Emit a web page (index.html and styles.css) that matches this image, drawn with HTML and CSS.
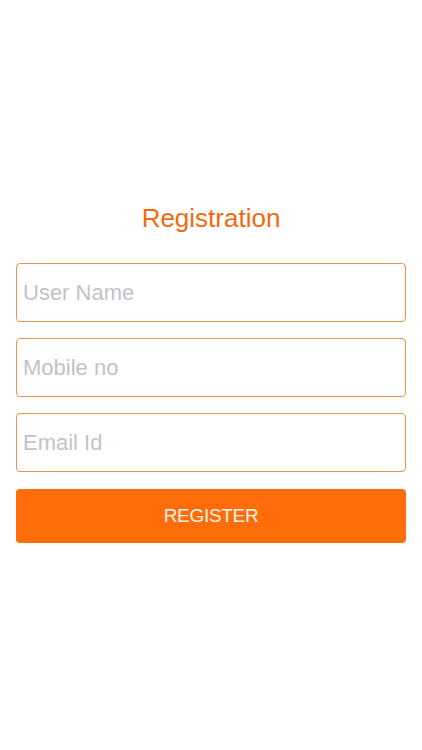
FILE: index.html
```html
<!DOCTYPE html>
<html lang="en">
<head>
  <meta charset="UTF-8" />
  <meta name="viewport" content="width=device-width, initial-scale=1.0"/>
  <title>Registration</title>
  <link rel="stylesheet" href="styles.css">
</head>
<body>
  <div class="container">
    <h1 class="title">Registration</h1>
    <form class="form">
      <input class="field" type="text" placeholder="User Name">
      <input class="field" type="tel" placeholder="Mobile no">
      <input class="field" type="email" placeholder="Email Id">
      <button class="btn" type="button">REGISTER</button>
    </form>
  </div>
</body>
</html>
```

FILE: styles.css
```css
* {
  margin: 0;
  padding: 0;
  box-sizing: border-box;
}

html, body {
  height: 100%;
  font-family: 'Liberation Sans', Arial, sans-serif;
  background: #ffffff;
}

.container {
  padding: 201px 16px 0;
}

.title {
  font-size: 26px;
  font-weight: normal;
  color: #f26a10;
  text-align: center;
  line-height: 34px;
}

.form {
  margin-top: 28px;
  display: flex;
  flex-direction: column;
  gap: 16px;
}

.field {
  height: 59px;
  border: 1px solid #f0924a;
  border-radius: 4px;
  padding: 0 6px;
  font-family: inherit;
  font-size: 22px;
  color: #333;
  outline: none;
}

.field::placeholder {
  color: #c2c2c8;
}

.btn {
  margin-top: 1px;
  height: 54px;
  border: none;
  border-radius: 4px;
  background: #ff6c0a;
  color: #fff4ea;
  font-family: inherit;
  font-size: 19px;
  font-weight: 300;
  letter-spacing: -0.3px;
}
```
